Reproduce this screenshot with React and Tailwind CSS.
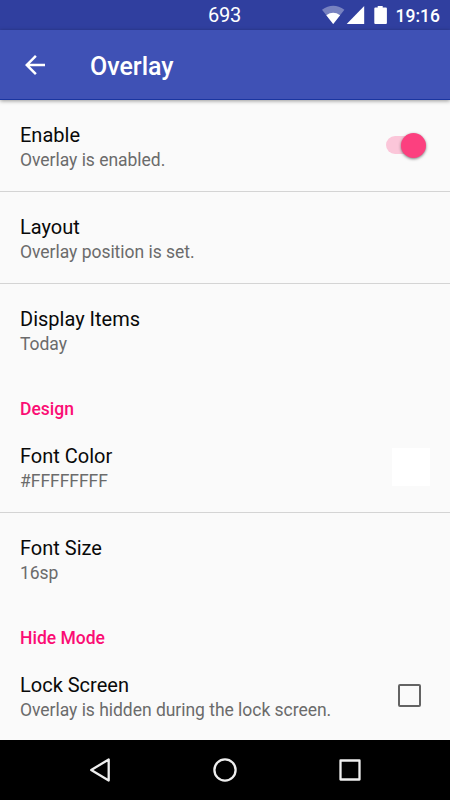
import { useState } from 'react';
import clsx from 'clsx';

const StatusBar = () => (
  <div className="relative h-[30px] shrink-0 bg-[#303f9f] text-white">
    <div className="absolute left-[208px] top-[3px] text-[20px] leading-6 tracking-[-0.2px]">693</div>
    <div className="flex h-full items-center justify-end pr-[10px]">
      <svg width="68" height="30" viewBox="0 0 68 30" fill="#fff" className="mr-[7px]">
        <path d="M1 9.8Q12.200 1.800 23.400 9.800L12.200 24Z" fillOpacity="0.35" />
        <path d="M5.300 15.200Q12.200 10.300 19.100 15.200L12.200 24Z" />
        <path d="M43.200 6V24H25.700Z" />
        <path d="M56.700 6h5v1.500h3.200a1 1 0 0 1 1 1V23a1 1 0 0 1-1 1H54.300a1 1 0 0 1-1-1V8.500a1 1 0 0 1 1-1h2.400z" />
      </svg>
      <span className="pt-px text-[17.5px] font-medium leading-[30px]">19:16</span>
    </div>
  </div>
);

const AppBar = ({ title }) => (
  <header className="relative z-10 flex h-[70px] shrink-0 items-center border-b border-[#1a35a0] bg-[#3f51b5] pl-5 text-white shadow-[0_1px_4px_rgba(0,0,0,0.4)]">
    <button aria-label="Back" className="mr-10">
      <svg width="30" height="30" viewBox="0 0 24 24" fill="currentColor">
        <path d="M20 11H7.830l5.590-5.590L12 4l-8 8 8 8 1.410-1.410L7.830 13H20v-2z" />
      </svg>
    </button>
    <h1 className="pt-[5px] text-[25px] font-medium leading-[30px]">{title}</h1>
  </header>
);

const Category = ({ children }) => (
  <h2 className="h-[46px] pl-5 pt-[21px] text-[17.5px] font-medium leading-6 text-[#fb0d74]">{children}</h2>
);

const Preference = ({ title, summary, divider, className, onClick, children }) => (
  <div
    onClick={onClick}
    className={clsx('flex h-[92px] shrink-0 justify-between pl-5', divider && 'border-b border-[#d4d4d4]', className)}
  >
    <div className="pt-[22px]">
      <div className="text-[20px] leading-[26px] text-[#090909]">{title}</div>
      <div className="text-[17.5px] leading-6 tracking-[-0.03px] text-[#6b6b6b]">{summary}</div>
    </div>
    {children}
  </div>
);

const Switch = ({ checked }) => (
  <div className="relative mr-[24px] mt-[36px] h-[18px] w-10">
    <div className={clsx('h-full w-[38px] rounded-full', checked ? 'bg-[#fbc6d9]' : 'bg-[#b9b9b9]')} />
    <div
      className={clsx(
        'absolute top-[-3.5px] size-[25px] rounded-full shadow-[0_1px_3px_rgba(0,0,0,0.5)]',
        checked ? 'right-0 bg-[#fc407f]' : 'left-0 bg-[#f1f1f1]'
      )}
    />
  </div>
);

const Checkbox = ({ checked }) => (
  <div className="mr-[29px] mt-[34px] size-[23px] rounded-[2px] border-2 border-[#636363]">
    {checked && <div className="size-full bg-[#fc407f]" />}
  </div>
);

const NavBar = () => (
  <nav className="flex h-[60px] shrink-0 items-center justify-center gap-[95px] bg-black">
    <svg width="30" height="30" viewBox="0 0 30 30" fill="none" stroke="#eee" strokeWidth="2.3" strokeLinejoin="round">
      <path d="M23.700 4.500V25.500L6.200 15Z" />
    </svg>
    <svg width="30" height="30" viewBox="0 0 30 30" fill="none" stroke="#eee" strokeWidth="2.3">
      <circle cx="15" cy="15" r="10.6" />
    </svg>
    <svg width="30" height="30" viewBox="0 0 30 30" fill="none" stroke="#eee" strokeWidth="2.3" strokeLinejoin="round">
      <rect x="5.500" y="5.500" width="19" height="19" />
    </svg>
  </nav>
);

const App = () => {
  const [enabled, setEnabled] = useState(true);
  const [hideOnLock, setHideOnLock] = useState(false);

  return (
    <div className="flex h-screen w-full flex-col overflow-hidden bg-[#fafafa] font-['Roboto',sans-serif]">
      <StatusBar />
      <AppBar title="Overlay" />
      <main className="flex-1 overflow-hidden">
        <Preference
          title="Enable"
          summary={enabled ? 'Overlay is enabled.' : 'Overlay is disabled.'}
          divider
          onClick={() => setEnabled(!enabled)}
        >
          <Switch checked={enabled} />
        </Preference>
        <Preference title="Layout" summary="Overlay position is set." divider />
        <Preference title="Display Items" summary="Today" />

        <Category>Design</Category>
        <Preference title="Font Color" summary="#FFFFFFFF" divider className="-mt-px">
          <div className="mr-5 mt-[27px] size-[38px] bg-white" />
        </Preference>
        <Preference title="Font Size" summary="16sp" />

        <Category>Hide Mode</Category>
        <Preference
          title="Lock Screen"
          summary="Overlay is hidden during the lock screen."
          className="-mt-px"
          onClick={() => setHideOnLock(!hideOnLock)}
        >
          <Checkbox checked={hideOnLock} />
        </Preference>
      </main>
      <NavBar />
    </div>
  );
};

export default App;
